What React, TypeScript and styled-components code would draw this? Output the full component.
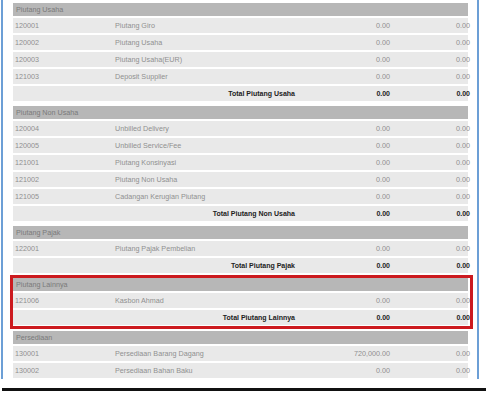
import styled, { createGlobalStyle } from "styled-components";

const GlobalStyle = createGlobalStyle`
  html, body {
    margin: 0;
    padding: 0;
    background: #ffffff;
  }
  body {
    font-family: "Liberation Sans", Arial, sans-serif;
  }
`;

const Page = styled.div`
  width: 486px;
  height: 394px;
  overflow: hidden;
  background: #fff;
`;

const Frame = styled.div`
  margin-left: 1px;
  width: 478px;
  height: 379px;
  border-left: 2px solid #6c9fd6;
  border-right: 2px solid #6c9fd6;
  padding: 3px 9px 0 10px;
  box-sizing: border-box;
  display: flex;
  flex-direction: column;
  gap: 5px;
  overflow: hidden;
`;

const Section = styled.div<{ $highlight?: boolean }>`
  display: flex;
  flex-direction: column;
  gap: 2px;
  ${(p) =>
    p.$highlight &&
    `
    outline: 3px solid #cc1a1f;
    margin-right: -2px;
    padding-right: 2px;
    padding-bottom: 1px;
  `}
`;

const Header = styled.div`
  height: 13px;
  background: #b7b7b7;
  color: #7a7a7a;
  font-size: 7.2px;
  line-height: 13px;
  padding-left: 3px;
`;

const Row = styled.div`
  height: 15px;
  background: #e9e9e9;
  display: grid;
  grid-template-columns: 102px 185px 91px 79px;
  align-items: center;
  font-size: 7.2px;
  color: #909090;
`;

const Code = styled.span`
  padding-left: 2px;
`;

const Name = styled.span``;

const TotalLabel = styled.span`
  grid-column: 1 / span 2;
  text-align: right;
  padding-right: 5px;
  font-weight: bold;
  color: #222;
  font-size: 7px;
`;

const Amount = styled.span<{ $bold?: boolean; $pad?: number }>`
  text-align: right;
  padding-right: ${(p) => p.$pad ?? 0}px;
  ${(p) => p.$bold && "font-weight: bold; color: #222; font-size: 7px;"}
`;

const BottomBar = styled.div`
  margin: 9px 0 0 2px;
  height: 3px;
  background: #111;
`;

type Item = { code: string; name: string; debit: string; credit: string };
type Group = { title: string; items: Item[]; total?: string; highlight?: boolean };

const groups: Group[] = [
  {
    title: "Piutang Usaha",
    items: [
      { code: "120001", name: "Piutang Giro", debit: "0.00", credit: "0.00" },
      { code: "120002", name: "Piutang Usaha", debit: "0.00", credit: "0.00" },
      { code: "120003", name: "Piutang Usaha(EUR)", debit: "0.00", credit: "0.00" },
      { code: "121003", name: "Deposit Supplier", debit: "0.00", credit: "0.00" },
    ],
    total: "Total Piutang Usaha",
  },
  {
    title: "Piutang Non Usaha",
    items: [
      { code: "120004", name: "Unbilled Delivery", debit: "0.00", credit: "0.00" },
      { code: "120005", name: "Unbilled Service/Fee", debit: "0.00", credit: "0.00" },
      { code: "121001", name: "Piutang Konsinyasi", debit: "0.00", credit: "0.00" },
      { code: "121002", name: "Piutang Non Usaha", debit: "0.00", credit: "0.00" },
      { code: "121005", name: "Cadangan Kerugian Piutang", debit: "0.00", credit: "0.00" },
    ],
    total: "Total Piutang Non Usaha",
  },
  {
    title: "Piutang Pajak",
    items: [
      { code: "122001", name: "Piutang Pajak Pembelian", debit: "0.00", credit: "0.00" },
    ],
    total: "Total Piutang Pajak",
  },
  {
    title: "Piutang Lainnya",
    items: [
      { code: "121006", name: "Kasbon Ahmad", debit: "0.00", credit: "0.00" },
    ],
    total: "Total Piutang Lainnya",
    highlight: true,
  },
  {
    title: "Persediaan",
    items: [
      { code: "130001", name: "Persediaan Barang Dagang", debit: "720,000.00", credit: "0.00" },
      { code: "130002", name: "Persediaan Bahan Baku", debit: "0.00", credit: "0.00" },
    ],
  },
];

const App = () => {
  return (
    <Page>
      <GlobalStyle />
      <Frame>
        {groups.map((group) => (
          <Section key={group.title} $highlight={group.highlight}>
            <Header>{group.title}</Header>
            {group.items.map((item) => (
              <Row key={item.code}>
                <Code>{item.code}</Code>
                <Name>{item.name}</Name>
                <Amount $pad={1}>{item.debit}</Amount>
                <Amount>{item.credit}</Amount>
              </Row>
            ))}
            {group.total && (
              <Row>
                <TotalLabel>{group.total}</TotalLabel>
                <Amount $bold $pad={1}>0.00</Amount>
                <Amount $bold>0.00</Amount>
              </Row>
            )}
          </Section>
        ))}
      </Frame>
      <BottomBar />
    </Page>
  );
};

export default App;
